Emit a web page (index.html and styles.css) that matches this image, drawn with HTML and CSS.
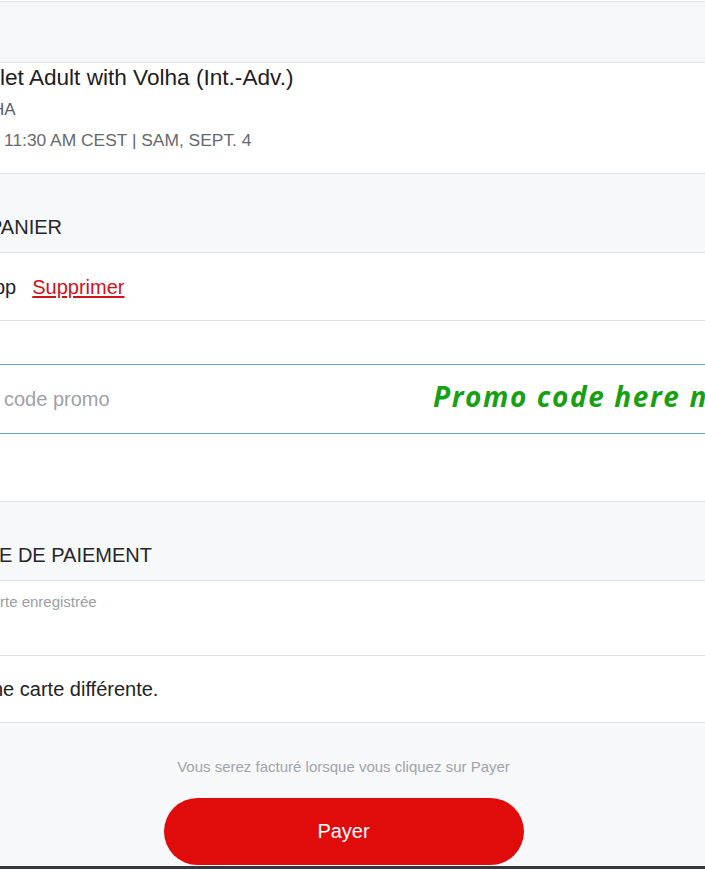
FILE: index.html
```html
<!DOCTYPE html>
<html lang="fr">
<head>
<meta charset="utf-8">
<title>Paiement</title>
<link rel="stylesheet" href="styles.css">
</head>
<body>
<main class="page">
  <div class="band band-top"></div>

  <section class="event">
    <h1 class="event-title">let Adult with Volha (Int.-Adv.)</h1>
    <p class="event-instructor">HA</p>
    <p class="event-time">11:30 AM CEST | SAM, SEPT. 4</p>
  </section>

  <div class="band section-head"><h2 class="head-cart">PANIER</h2></div>

  <div class="row cart-item">
    <span class="item-name">pp</span>
    <a class="remove-link" href="#">Supprimer</a>
  </div>

  <div class="promo-wrap">
    <div class="promo">
      <input class="promo-input" type="text" placeholder="code promo">
      <span class="promo-note">Promo code here now</span>
    </div>
  </div>

  <div class="band section-head"><h2 class="head-pay">E DE PAIEMENT</h2></div>

  <div class="row saved-card">
    <span class="saved-label">rte enregistrée</span>
  </div>

  <div class="row other-card">
    <span class="other-label">ne carte différente.</span>
  </div>

  <footer class="checkout">
    <p class="billing-note">Vous serez facturé lorsque vous cliquez sur Payer</p>
    <button class="pay-btn" type="button">Payer</button>
  </footer>
</main>
</body>
</html>
```

FILE: styles.css
```css
html, body {
  margin: 0;
  padding: 0;
  background: #ffffff;
  height: 869px;
  overflow: hidden;
}

body {
  font-family: "Liberation Sans", Arial, sans-serif;
  color: #222326;
}

.page {
  display: flex;
  flex-direction: column;
  width: 705px;
  overflow: hidden;
}

.band {
  background: #f7f8fa;
}

.band-top {
  margin-top: 1px;
  height: 60px;
  border-top: 1px solid #e0e1e4;
  border-bottom: 1px solid #e0e1e4;
}

/* event block */
.event {
  padding: 2px 0 0;
  height: 108px;
  border-bottom: 1px solid #e0e1e4;
  white-space: nowrap;
}

.event-title {
  margin: 0;
  font-size: 22.6px;
  line-height: 26px;
  font-weight: 400;
  color: #1f2023;
}

.event-instructor {
  margin: 9px 0 0 -8px;
  font-size: 17px;
  line-height: 20px;
  color: #5b5e62;
}

.event-time {
  margin: 10px 0 0 4px;
  font-size: 17.4px;
  line-height: 20px;
  color: #66696d;
}

/* section headers */
.section-head {
  padding: 41px 0 13px;
  border-bottom: 1px solid #e0e1e4;
  white-space: nowrap;
}

.section-head h2 {
  margin: 0;
  font-size: 20px;
  line-height: 24px;
  font-weight: 400;
  color: #25272b;
}

.section-head .head-cart { margin-left: -11px; }
.section-head .head-pay { margin-left: -1px; }

/* rows */
.row {
  display: flex;
  align-items: center;
  border-bottom: 1px solid #e0e1e4;
  white-space: nowrap;
  font-size: 20px;
  line-height: 24px;
}

.cart-item {
  padding: 22px 0 21px;
  gap: 16px;
}

.item-name {
  margin-left: -6px;
  color: #222326;
}

.remove-link {
  color: #d0121b;
  text-decoration: underline;
  text-underline-offset: 2px;
}

/* promo */
.promo-wrap {
  padding: 43px 0 67px;
  border-bottom: 1px solid #e0e1e4;
}

.promo {
  position: relative;
  height: 68px;
  border-top: 1px solid #64a9c6;
  border-bottom: 1px solid #64a9c6;
  display: flex;
  align-items: center;
}

.promo-input {
  border: 0;
  outline: 0;
  padding: 0;
  margin-left: 4px;
  width: 300px;
  font-family: "Liberation Sans", Arial, sans-serif;
  font-size: 20px;
  line-height: 24px;
  background: transparent;
  color: #222326;
}

.promo-input::placeholder {
  color: #9da1a6;
}

.promo-note {
  position: absolute;
  left: 433px;
  top: 11px;
  font-family: "Open Sans", "DejaVu Sans", sans-serif;
  font-weight: 700;
  font-style: italic;
  font-size: 28px;
  line-height: 40px;
  color: #17a012;
  white-space: nowrap;
  letter-spacing: 1.6px;
}

/* payment */
.saved-card {
  height: 75px;
  align-items: flex-start;
  padding-top: 12px;
  box-sizing: border-box;
}

.saved-label {
  font-size: 15px;
  line-height: 18px;
  color: #9b9ea3;
}

.other-card {
  padding: 21px 0 21px;
}

.other-label {
  margin-left: -8px;
  color: #222326;
}

/* footer */
.checkout {
  background: #f7f8fa;
  display: flex;
  flex-direction: column;
  align-items: center;
  padding: 35px 18px 1px 0;
  border-bottom: 3px solid #34373b;
}

.billing-note {
  margin: 0;
  font-size: 15px;
  line-height: 18px;
  color: #a0a4a9;
}

.pay-btn {
  margin-top: 22px;
  width: 360px;
  height: 67px;
  border: 0;
  border-radius: 34px;
  background: #e00c0c;
  color: #ffffff;
  font-family: "Liberation Sans", Arial, sans-serif;
  font-size: 20px;
  cursor: pointer;
}
```
